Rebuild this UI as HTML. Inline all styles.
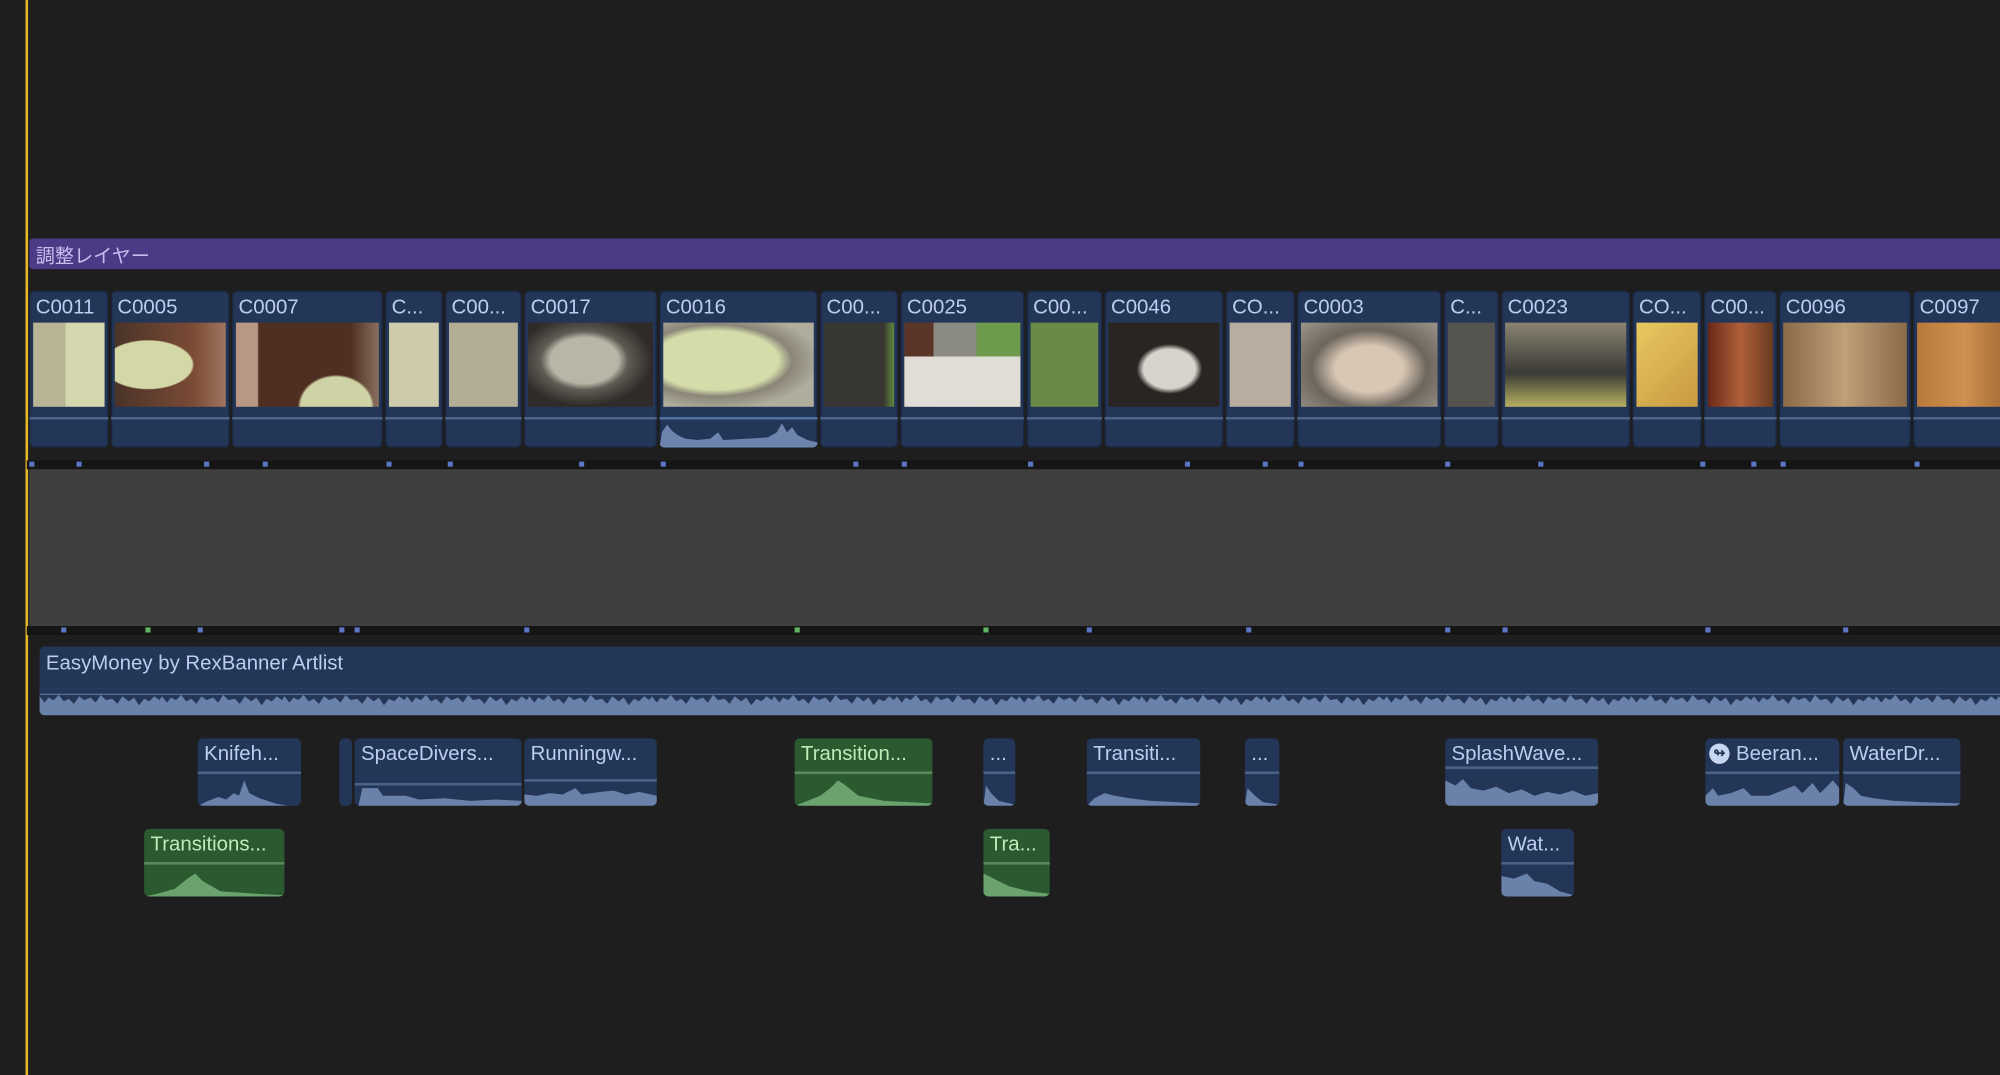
<!DOCTYPE html>
<html><head><meta charset="utf-8"><style>
html,body{margin:0;padding:0;background:#1e1e1e;overflow:hidden}
#root{position:absolute;left:0;top:0;width:1568px;height:843px;transform:scale(1.27551,1.2752);transform-origin:0 0;background:#1e1e1e;font-family:"Liberation Sans","Noto Sans CJK JP",sans-serif}
.a{position:absolute}
.v{position:absolute;top:228px;height:123px;background:#233658;border-radius:4px;overflow:hidden;box-shadow:0 0 0 1px #1a2740 inset}
.v .t{position:absolute;left:5px;top:5px;font-size:16px;color:#bccdf0;white-space:nowrap}
.v .th{position:absolute;left:3px;right:3px;top:25px;height:66px}
.v .ln{position:absolute;left:0;right:0;top:99px;height:2px;background:#4c6388}
.c{position:absolute;height:53px;background:#233658;border-radius:4px;overflow:hidden}
.c .t{position:absolute;left:5px;top:4px;font-size:16px;color:#bccdf0;white-space:nowrap}
.c .ln{position:absolute;left:0;right:0;top:26px;height:2px;background:#4c6388}
.c svg{position:absolute;left:0;bottom:0;width:100%;height:24px}
.g{background:#2b5a31}
.g .t{color:#bfeab9}
.g .ln{background:#5a8a5c}
.m{position:absolute;width:4px;height:4px;background:#5a76c4}
</style></head><body><div id="root">
<div class="a" style="left:20px;top:0;width:2px;height:843px;background:#e8b72a"></div>
<div class="a" style="left:23px;top:187px;width:1545px;height:24px;background:#4b3a86;border-radius:3px 0 0 3px"></div>
<div class="a" style="left:28px;top:190px;font-size:15px;color:#c9bdf0">調整レイヤー</div>

<div class="v" style="left:23px;width:62px"><div class="t">C0011</div><div class="th" style="background:linear-gradient(90deg,#b9b594 0 45%,#d4d6ad 45%)"></div><div class="ln"></div></div>
<div class="v" style="left:87px;width:93px"><div class="t">C0005</div><div class="th" style="background:radial-gradient(ellipse at 30% 50%,#d4d7a6 0 40%,transparent 42%),linear-gradient(90deg,#4a3328,#7a4a35 70%,#a07560);"></div><div class="ln"></div></div>
<div class="v" style="left:182px;width:118px"><div class="t">C0007</div><div class="th" style="background:radial-gradient(ellipse at 70% 100%,#cfd2a4 0 25%,transparent 27%),linear-gradient(90deg,#b89785 0 15%,#4e2f22 16% 80%,#8a7060)"></div><div class="ln"></div></div>
<div class="v" style="left:302px;width:45px"><div class="t">C...</div><div class="th" style="background:#cdcbac"></div><div class="ln"></div></div>
<div class="v" style="left:349px;width:60px"><div class="t">C00...</div><div class="th" style="background:#b3ad95"></div><div class="ln"></div></div>
<div class="v" style="left:411px;width:104px"><div class="t">C0017</div><div class="th" style="background:radial-gradient(ellipse at 45% 45%,#b8b6a6 0 35%,#5f5c55 45%,#2e2b28 70%)"></div><div class="ln"></div></div>
<div class="v" style="left:517px;width:124px"><div class="t">C0016</div><div class="th" style="background:radial-gradient(ellipse at 35% 45%,#d4dcaa 0 45%,#8a8578 55%,#b0ad9c 75%)"></div><div class="ln" style="background:#5070a0"></div>
<svg class="a" style="left:0;bottom:0;width:124px;height:22px" viewBox="0 0 124 22" preserveAspectRatio="none"><path d="M0 22 L2 10 L6 4 L10 9 L14 12 L20 15 L30 16 L40 15 L46 10 L50 16 L70 15 L85 14 L92 10 L96 3 L100 10 L104 6 L108 12 L116 16 L124 18 L124 22Z" fill="#6d84ad"/></svg></div>
<div class="v" style="left:643px;width:61px"><div class="t">C00...</div><div class="th" style="background:linear-gradient(90deg,#383733 85%,#5f8a3a)"></div><div class="ln"></div></div>
<div class="v" style="left:706px;width:97px"><div class="t">C0025</div><div class="th" style="background:linear-gradient(180deg,transparent 0 40%,#e0ddd6 40%),linear-gradient(90deg,#5a3528 0 25%,#8a8a80 25% 62%,#6e9a4d 62%)"></div><div class="ln"></div></div>
<div class="v" style="left:805px;width:59px"><div class="t">C00...</div><div class="th" style="background:#6b8a48"></div><div class="ln"></div></div>
<div class="v" style="left:866px;width:93px"><div class="t">C0046</div><div class="th" style="background:radial-gradient(ellipse at 55% 55%,#d8d3cc 0 30%,#2a2522 38%)"></div><div class="ln"></div></div>
<div class="v" style="left:961px;width:54px"><div class="t">CO...</div><div class="th" style="background:#b9ada2"></div><div class="ln"></div></div>
<div class="v" style="left:1017px;width:113px"><div class="t">C0003</div><div class="th" style="background:radial-gradient(ellipse at 50% 55%,#d8c7b4 0 35%,#6d665d 60%,#9b958a)"></div><div class="ln"></div></div>
<div class="v" style="left:1132px;width:43px"><div class="t">C...</div><div class="th" style="background:#55544f"></div><div class="ln"></div></div>
<div class="v" style="left:1177px;width:101px"><div class="t">C0023</div><div class="th" style="background:linear-gradient(180deg,#8a8470,#3a3a36 60%,#b8b060)"></div><div class="ln"></div></div>
<div class="v" style="left:1280px;width:54px"><div class="t">CO...</div><div class="th" style="background:linear-gradient(135deg,#e8c860,#c89a40)"></div><div class="ln"></div></div>
<div class="v" style="left:1336px;width:57px"><div class="t">C00...</div><div class="th" style="background:linear-gradient(90deg,#6a2818,#b0603a,#6a3a20)"></div><div class="ln"></div></div>
<div class="v" style="left:1395px;width:103px"><div class="t">C0096</div><div class="th" style="background:linear-gradient(90deg,#8a6a48,#c0a078,#8a6a48)"></div><div class="ln"></div></div>
<div class="v" style="left:1500px;width:80px"><div class="t">C0097</div><div class="th" style="background:linear-gradient(90deg,#b87a3a,#d09050,#a06830)"></div><div class="ln"></div></div>

<div class="a" style="left:21px;top:361px;width:1547px;height:7px;background:#151515"></div>
<div class="a" style="left:23px;top:368px;width:1545px;height:123px;background:#3f3f3f"></div>
<div class="a" style="left:21px;top:491px;width:1547px;height:7px;background:#151515"></div>
<div class="m" style="left:23px;top:362px"></div><div class="m" style="left:60px;top:362px"></div><div class="m" style="left:160px;top:362px"></div><div class="m" style="left:206px;top:362px"></div><div class="m" style="left:303px;top:362px"></div><div class="m" style="left:351px;top:362px"></div><div class="m" style="left:454px;top:362px"></div><div class="m" style="left:518px;top:362px"></div><div class="m" style="left:669px;top:362px"></div><div class="m" style="left:707px;top:362px"></div><div class="m" style="left:806px;top:362px"></div><div class="m" style="left:929px;top:362px"></div><div class="m" style="left:990px;top:362px"></div><div class="m" style="left:1018px;top:362px"></div><div class="m" style="left:1133px;top:362px"></div><div class="m" style="left:1206px;top:362px"></div><div class="m" style="left:1333px;top:362px"></div><div class="m" style="left:1373px;top:362px"></div><div class="m" style="left:1396px;top:362px"></div><div class="m" style="left:1501px;top:362px"></div>
<div class="m" style="left:48px;top:492px"></div><div class="m" style="left:114px;top:492px;background:#5fb560"></div><div class="m" style="left:155px;top:492px"></div><div class="m" style="left:266px;top:492px"></div><div class="m" style="left:278px;top:492px"></div><div class="m" style="left:411px;top:492px"></div><div class="m" style="left:623px;top:492px;background:#5fb560"></div><div class="m" style="left:771px;top:492px;background:#5fb560"></div><div class="m" style="left:852px;top:492px"></div><div class="m" style="left:977px;top:492px"></div><div class="m" style="left:1133px;top:492px"></div><div class="m" style="left:1178px;top:492px"></div><div class="m" style="left:1337px;top:492px"></div><div class="m" style="left:1445px;top:492px"></div>

<div class="a" style="left:31px;top:507px;width:1537px;height:54px;background:#233658;border-radius:4px 0 0 4px;overflow:hidden">
<div class="a" style="left:5px;top:5px;font-size:16px;color:#bccdf0;white-space:nowrap">EasyMoney by RexBanner Artlist</div>
<div class="a" style="left:0;right:0;top:37px;height:1px;background:#5a729a"></div>
<svg class="a" style="left:0;top:33px" width="1537" height="21"><defs><pattern id="w" width="96" height="21" patternUnits="userSpaceOnUse"><path d="M0 6 L4 11 L7 7 L11 9 L15 5 L19 10 L23 8 L27 12 L31 6 L35 9 L40 7 L44 11 L48 5 L52 9 L57 8 L61 12 L65 6 L70 10 L74 7 L78 13 L82 8 L86 10 L90 6 L94 9 L96 6 L96 21 L0 21Z" fill="#6a81aa"/></pattern></defs><rect width="1537" height="21" fill="url(#w)"/></svg>
</div>

<div class="c" style="left:155px;top:579px;width:81px"><div class="t">Knifeh...</div><div class="ln"></div><svg viewBox="0 0 80 24" preserveAspectRatio="none"><path d="M0 24 L8 20 L16 17 L22 19 L28 14 L32 16 L36 4 L40 14 L48 18 L60 22 L70 24Z" fill="#6a81aa"/></svg></div>
<div class="c" style="left:266px;top:579px;width:10px"></div>
<div class="c" style="left:278px;top:579px;width:131px"><div class="t">SpaceDivers...</div><div class="ln" style="top:35px"></div><svg viewBox="0 0 130 24" preserveAspectRatio="none"><path d="M3 24 L6 10 L18 10 L22 16 L40 16 L50 19 L70 18 L90 20 L110 19 L130 20 L130 24Z" fill="#6a81aa"/></svg></div>
<div class="c" style="left:411px;top:579px;width:104px"><div class="t">Runningw...</div><div class="ln" style="top:32px"></div><svg viewBox="0 0 104 24" preserveAspectRatio="none"><path d="M0 24 L0 15 L10 16 L20 14 L30 15 L40 10 L45 15 L60 13 L70 12 L80 15 L90 13 L104 16 L104 24Z" fill="#6a81aa"/></svg></div>
<div class="c g" style="left:623px;top:579px;width:108px"><div class="t">Transition...</div><div class="ln"></div><svg viewBox="0 0 108 24" preserveAspectRatio="none"><path d="M0 24 L10 20 L20 16 L28 10 L34 4 L40 8 L50 16 L70 20 L108 22 L108 24Z" fill="#6aa36e"/></svg></div>
<div class="c" style="left:771px;top:579px;width:25px"><div class="t">...</div><div class="ln"></div><svg viewBox="0 0 25 24" preserveAspectRatio="none"><path d="M0 24 L2 8 L6 14 L12 20 L25 23 L25 24Z" fill="#6a81aa"/></svg></div>
<div class="c" style="left:852px;top:579px;width:89px"><div class="t">Transiti...</div><div class="ln"></div><svg viewBox="0 0 89 24" preserveAspectRatio="none"><path d="M0 24 L6 18 L14 14 L22 16 L34 18 L50 20 L70 21 L89 22 L89 24Z" fill="#6a81aa"/></svg></div>
<div class="c" style="left:976px;top:579px;width:27px"><div class="t">...</div><div class="ln"></div><svg viewBox="0 0 27 24" preserveAspectRatio="none"><path d="M0 24 L2 10 L8 16 L14 21 L27 23 L27 24Z" fill="#6a81aa"/></svg></div>
<div class="c" style="left:1133px;top:579px;width:120px"><div class="t">SplashWave...</div><div class="ln" style="top:22px"></div><svg viewBox="0 0 120 24" preserveAspectRatio="none"><path d="M0 24 L0 4 L8 8 L14 3 L20 10 L30 12 L40 9 L50 14 L60 11 L70 16 L80 13 L90 15 L100 12 L110 16 L120 14 L120 24Z" fill="#6a81aa"/></svg></div>
<div class="c" style="left:1337px;top:579px;width:105px"><div class="a" style="left:3px;top:4px;width:16px;height:16px;border-radius:50%;background:#c9d6f2;color:#233658;font-size:11px;line-height:16px;text-align:center;font-weight:bold">↬</div><div class="t" style="left:24px">Beeran...</div><div class="ln"></div><svg viewBox="0 0 105 24" preserveAspectRatio="none"><path d="M0 24 L0 16 L6 10 L10 16 L20 14 L30 10 L36 16 L50 16 L60 12 L70 8 L76 14 L84 6 L90 14 L100 4 L105 10 L105 24Z" fill="#6a81aa"/></svg></div>
<div class="c" style="left:1445px;top:579px;width:92px"><div class="t">WaterDr...</div><div class="ln"></div><svg viewBox="0 0 92 24" preserveAspectRatio="none"><path d="M0 24 L2 6 L8 10 L14 16 L24 18 L40 20 L60 21 L92 22 L92 24Z" fill="#6a81aa"/></svg></div>

<div class="c g" style="left:113px;top:650px;width:110px"><div class="t">Transitions...</div><div class="ln"></div><svg viewBox="0 0 110 24" preserveAspectRatio="none"><path d="M0 24 L10 22 L24 18 L34 10 L40 6 L46 12 L60 20 L90 22 L110 23 L110 24Z" fill="#6aa36e"/></svg></div>
<div class="c g" style="left:771px;top:650px;width:52px"><div class="t">Tra...</div><div class="ln"></div><svg viewBox="0 0 52 24" preserveAspectRatio="none"><path d="M0 24 L0 6 L8 10 L20 16 L36 20 L52 22 L52 24Z" fill="#6aa36e"/></svg></div>
<div class="c" style="left:1177px;top:650px;width:57px"><div class="t">Wat...</div><div class="ln"></div><svg viewBox="0 0 57 24" preserveAspectRatio="none"><path d="M0 24 L0 8 L10 10 L20 6 L26 12 L36 14 L46 20 L57 23 L57 24Z" fill="#6a81aa"/></svg></div>
</div></body></html>
